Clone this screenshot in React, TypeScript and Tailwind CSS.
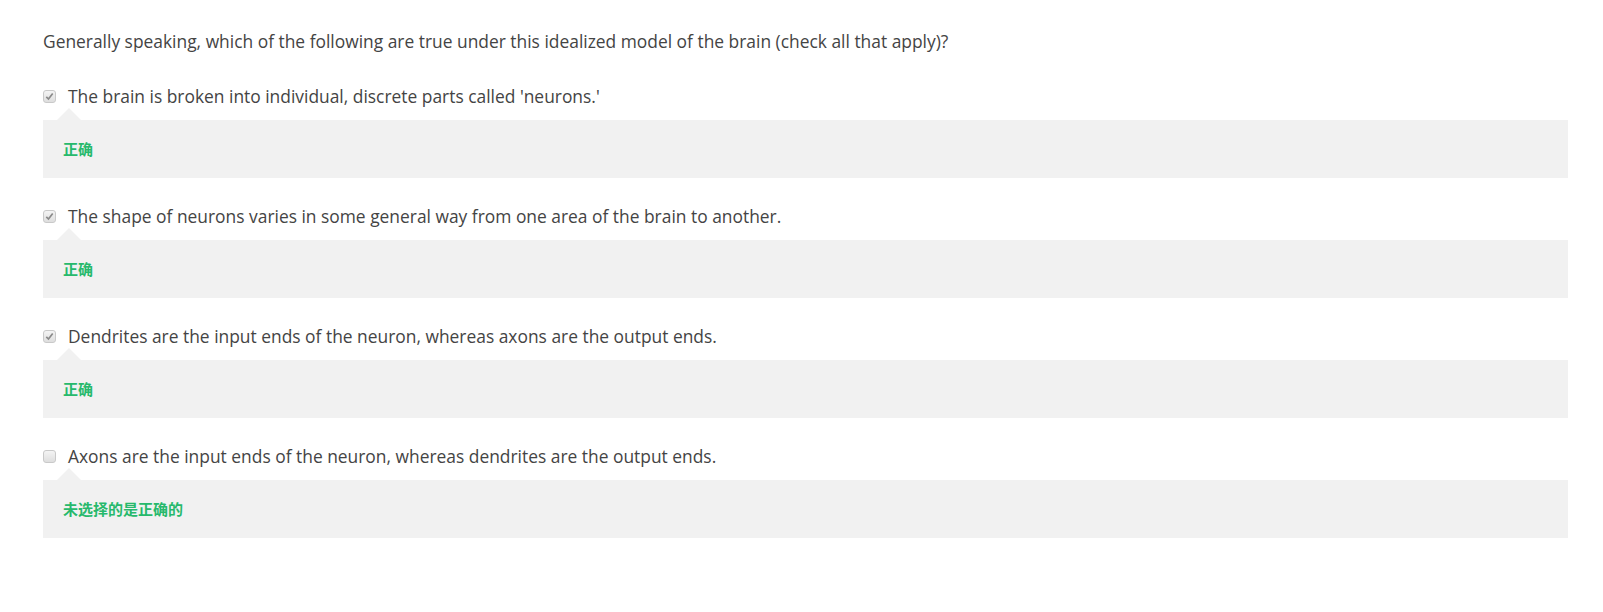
const options = [
  { text: "The brain is broken into individual, discrete parts called 'neurons.'", checked: true, feedback: "正确" },
  { text: "The shape of neurons varies in some general way from one area of the brain to another.", checked: true, feedback: "正确" },
  { text: "Dendrites are the input ends of the neuron, whereas axons are the output ends.", checked: true, feedback: "正确" },
  { text: "Axons are the input ends of the neuron, whereas dendrites are the output ends.", checked: false, feedback: "未选择的是正确的" },
];

function Checkbox({ checked }: { checked: boolean }) {
  return (
    <span className="flex h-[13px] w-[13px] shrink-0 items-center justify-center rounded-[3px] border border-[#c9c9c9] bg-gradient-to-b from-[#f4f4f4] to-[#dedede]">
      {checked && (
        <svg width="9" height="9" viewBox="0 0 9 9">
          <path d="M1.3 4.8 L3.5 7 L7.7 1.6" fill="none" stroke="#8a8a8a" strokeWidth="1.7" />
        </svg>
      )}
    </span>
  );
}

export default function App() {
  return (
    <div className="min-h-screen bg-white pl-[43px] pr-[35px] pt-[30px] font-['Open_Sans',sans-serif] text-[17.4px] text-[#444]">
      <p className="leading-[22px]">
        Generally speaking, which of the following are true under this idealized model of the brain (check all that apply)?
      </p>
      <div className="mt-[33px]">
        {options.map((o, i) => (
          <div key={i} className="mb-[27px]">
            <label className="flex items-center gap-[12px] leading-[22px]">
              <Checkbox checked={o.checked} />
              <span>{o.text}</span>
            </label>
            <div className="relative mt-[13px] flex h-[58px] items-center bg-[#f1f1f1] px-[20px]">
              <span className="absolute left-[14px] top-[-12px] h-0 w-0 border-x-[12.5px] border-b-[12px] border-x-transparent border-b-[#f1f1f1]" />
              <span className="font-['Open_Sans','Noto_Sans_CJK_SC',sans-serif] text-[15px] font-bold text-[#27b96c]">
                {o.feedback}
              </span>
            </div>
          </div>
        ))}
      </div>
    </div>
  );
}
